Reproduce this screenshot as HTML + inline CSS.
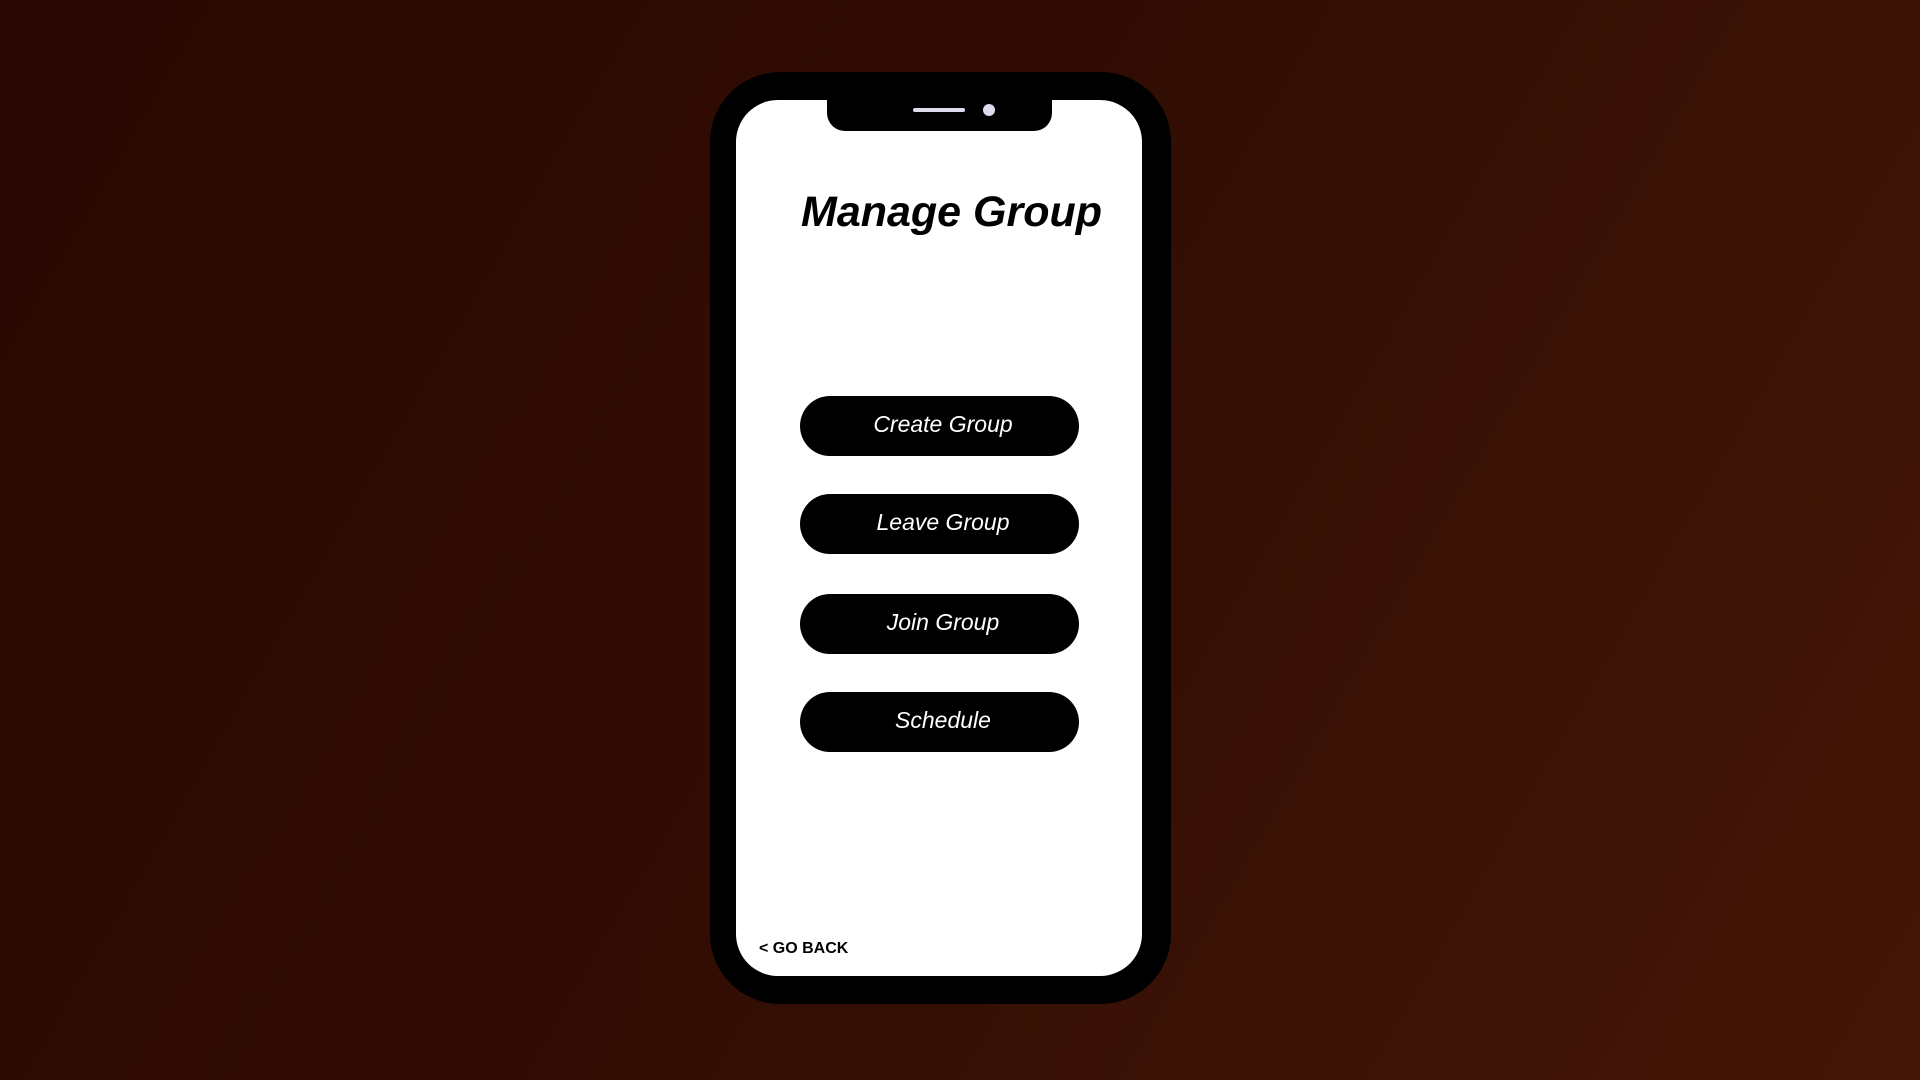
<!DOCTYPE html>
<html><head><style>
html,body{margin:0;padding:0;width:1920px;height:1080px;overflow:hidden}
body{background:linear-gradient(120deg,#2a0803 0%,#320d04 50%,#441706 100%);position:relative;font-family:"Liberation Sans",sans-serif}
.phone{position:absolute;left:710px;top:72px;width:461px;height:932px;background:#000;border-radius:70px}
.screen{position:absolute;left:736px;top:100px;width:406px;height:876px;background:#fff;border-radius:42px}
.notch{position:absolute;left:827px;top:90px;width:225px;height:41px;background:#000;border-radius:0 0 18px 18px}
.spk{position:absolute;left:913px;top:108px;width:52px;height:4px;background:#dde;border-radius:2px}
.cam{position:absolute;left:983px;top:104px;width:12px;height:12px;background:#dde;border-radius:50%}
h1{position:absolute;left:801px;top:188px;margin:0;font-size:43px;font-weight:bold;font-style:italic;color:#000;white-space:nowrap}
.btn{position:absolute;left:800px;width:279px;height:60px;background:#000;border-radius:30px;color:#fff;font-style:italic;font-size:23px;text-align:center;line-height:56px;box-sizing:border-box;padding-left:7px}
.back{position:absolute;left:759px;top:940px;font-weight:bold;font-size:16px;color:#000}
</style></head><body>
<div class="phone"></div>
<div class="screen"></div>
<div class="notch"></div>
<div class="spk"></div>
<div class="cam"></div>
<h1>Manage Group</h1>
<div class="btn" style="top:396px">Create Group</div>
<div class="btn" style="top:494px">Leave Group</div>
<div class="btn" style="top:594px">Join Group</div>
<div class="btn" style="top:692px">Schedule</div>
<div class="back">&lt; GO BACK</div>
</body></html>
